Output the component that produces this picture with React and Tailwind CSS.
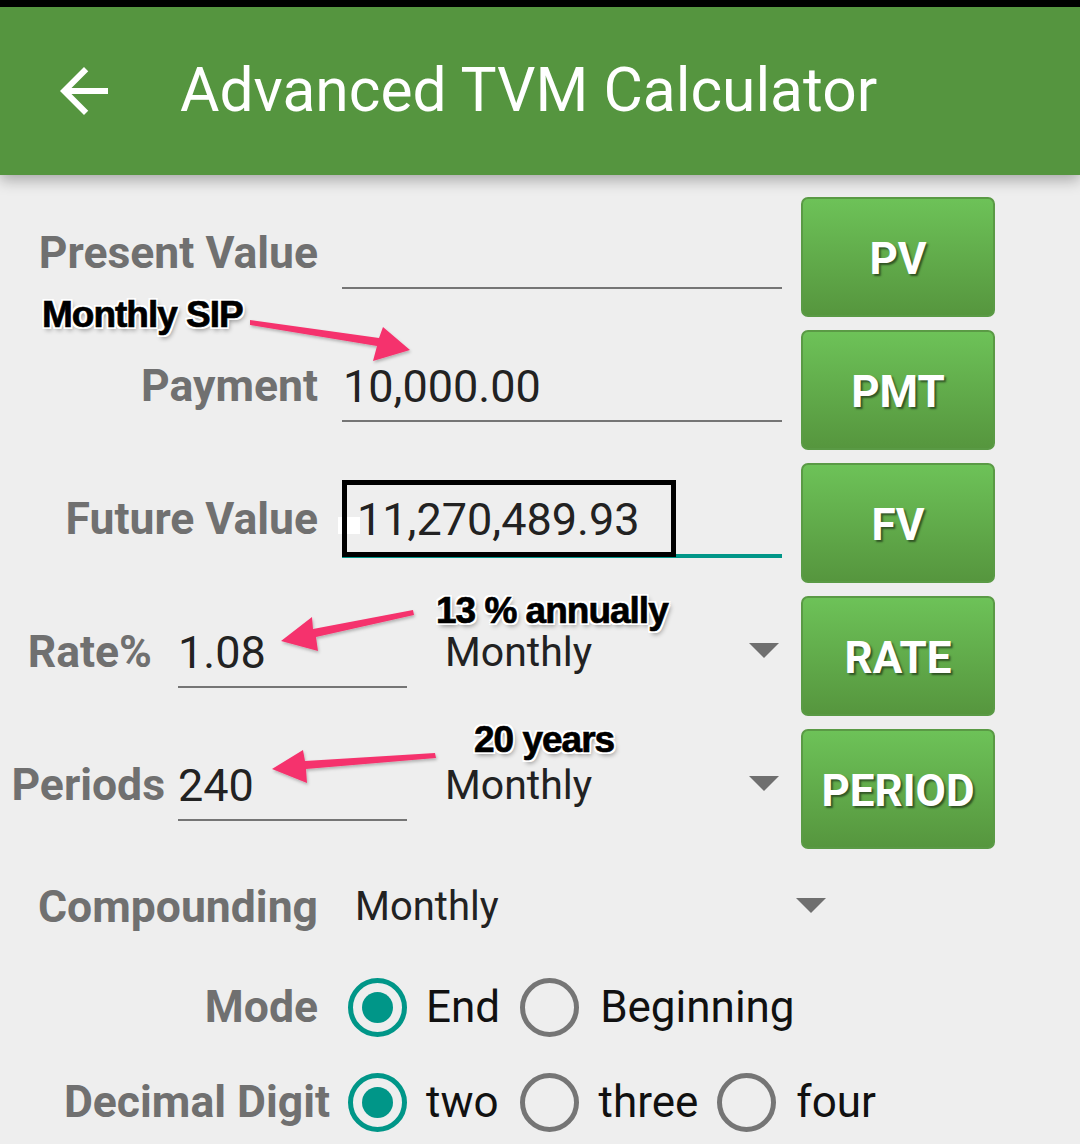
import React from "react";

function Btn({ children }) {
  return (
    <div className="flex h-[120px] w-[194px] items-center justify-center rounded-[7px] border-2 border-[#5a9a45] bg-linear-to-b from-[#6dc258] to-[#56963e] pt-[4px] text-[44px] font-bold text-white [text-shadow:2px_2px_2px_rgba(0,0,0,0.5)]">
      {children}
    </div>
  );
}

function Tri({ className = "" }) {
  return (
    <svg width="30" height="15" viewBox="0 0 30 15" className={className}>
      <polygon points="0,0 30,0 15,15" fill="#6f6f6f" />
    </svg>
  );
}

function Radio({ checked }) {
  return checked ? (
    <div className="flex h-[59px] w-[59px] shrink-0 items-center justify-center rounded-full border-[5px] border-[#009688]">
      <div className="h-[31px] w-[31px] rounded-full bg-[#009688]" />
    </div>
  ) : (
    <div className="h-[59px] w-[59px] shrink-0 rounded-full border-[5px] border-[#757575]" />
  );
}

const label = "text-right text-[44.5px] font-bold text-[#707070] leading-none";
const value = "text-[45px] text-[#222222] leading-none";
const annot =
  "absolute font-['Liberation_Sans',Arial,sans-serif] font-bold text-[37px] leading-[37px] tracking-[-1px] text-black whitespace-nowrap [-webkit-text-stroke:0.7px_#000] [text-shadow:-2px_-2px_0_#fff,2px_-2px_0_#fff,-2px_2px_0_#fff,2px_2px_0_#fff,0_2px_0_#fff,0_-2px_0_#fff,2px_0_0_#fff,-2px_0_0_#fff,2px_3px_5px_rgba(0,0,0,0.45)]";

export default function App() {
  return (
    <div className="relative h-[1144px] w-[1080px] overflow-hidden bg-[#eeeeee] font-['Roboto',sans-serif]">
      <div className="h-[7px] bg-black" />
      <div className="relative z-10 flex h-[168px] items-center bg-[#55953f] shadow-[0_5px_14px_rgba(0,0,0,0.3)]">
        <svg width="72" height="72" viewBox="0 0 24 24" className="ml-[48px]">
          <path d="M20 11H7.83l5.59-5.59L12 4l-8 8 8 8 1.41-1.41L7.83 13H20v-2z" fill="#ffffff" />
        </svg>
        <span className="ml-[60px] text-[60.5px] leading-none text-white">Advanced TVM Calculator</span>
      </div>

      <div className="flex flex-col gap-[13px] pt-[22px]">
        {/* PV */}
        <div className="flex h-[120px]">
          <div className="flex w-[801px] items-start">
            <div className={`mt-[26px] flex h-[60px] w-[318px] items-center justify-end ${label}`}>Present Value</div>
            <div className="ml-[24px] mt-[26px] h-[66px] w-[440px] border-b-2 border-[#757575]" />
          </div>
          <Btn>PV</Btn>
        </div>
        {/* PMT */}
        <div className="flex h-[120px]">
          <div className="flex w-[801px] items-start">
            <div className={`mt-[26px] flex h-[60px] w-[318px] items-center justify-end ${label}`}>Payment</div>
            <div className="ml-[24px] mt-[26px] flex h-[66px] w-[440px] items-center border-b-2 border-[#757575] pb-[4px] pl-[1px]">
              <span className={value}>10,000.00</span>
            </div>
          </div>
          <Btn>PMT</Btn>
        </div>
        {/* FV */}
        <div className="flex h-[120px]">
          <div className="flex w-[801px] items-start">
            <div className={`mt-[26px] flex h-[60px] w-[318px] items-center justify-end ${label}`}>Future Value</div>
            <div className="relative ml-[24px] mt-[26px] flex h-[69px] w-[440px] items-center border-b-4 border-[#009688] pb-[4px] pl-[15px]">
              <div className="absolute left-[-4px] top-[28px] h-[17px] w-[22px] bg-white" />
              <span className={`relative ${value}`}>11,270,489.93</span>
              <div className="absolute left-0 top-[-9px] h-[77px] w-[334px] border-[5px] border-black" />
            </div>
          </div>
          <Btn>FV</Btn>
        </div>
        {/* RATE */}
        <div className="flex h-[120px]">
          <div className="flex w-[801px] items-start">
            <div className={`mt-[26px] flex h-[60px] w-[152px] items-center justify-end ${label}`}>Rate%</div>
            <div className="ml-[26px] mt-[26px] flex h-[66px] w-[229px] items-center border-b-2 border-[#757575] pb-[4px]">
              <span className={value}>1.08</span>
            </div>
            <div className="ml-[23px] mt-[26px] flex h-[60px] w-[352px] items-center justify-between pl-[15px] pr-[3px]">
              <span className="text-[41px] leading-none text-[#222222]">Monthly</span>
              <Tri className="mb-[4px]" />
            </div>
          </div>
          <Btn>RATE</Btn>
        </div>
        {/* PERIOD */}
        <div className="flex h-[120px]">
          <div className="flex w-[801px] items-start">
            <div className={`mt-[26px] flex h-[60px] w-[165px] items-center justify-end ${label}`}>Periods</div>
            <div className="ml-[13px] mt-[26px] flex h-[66px] w-[229px] items-center border-b-2 border-[#757575] pb-[4px]">
              <span className={value}>240</span>
            </div>
            <div className="ml-[23px] mt-[26px] flex h-[60px] w-[352px] items-center justify-between pl-[15px] pr-[3px]">
              <span className="text-[41px] leading-none text-[#222222]">Monthly</span>
              <Tri className="mb-[4px]" />
            </div>
          </div>
          <Btn>PERIOD</Btn>
        </div>
      </div>

      {/* Compounding */}
      <div className="mt-[18px] flex h-[80px] items-center">
        <div className={`w-[318px] ${label}`}>Compounding</div>
        <div className="ml-[37px] flex w-[471px] items-center justify-between">
          <span className="text-[40px] leading-none text-[#222222]">Monthly</span>
          <Tri className="mb-[4px]" />
        </div>
      </div>

      {/* Mode */}
      <div className="mt-[20px] flex h-[80px] items-center">
        <div className={`w-[318px] ${label}`}>Mode</div>
        <div className="ml-[30px] flex items-center">
          <Radio checked />
          <span className="ml-[19px] text-[44px] leading-none text-[#111111]">End</span>
          <div className="ml-[20px]"><Radio /></div>
          <span className="ml-[21px] text-[44px] leading-none text-[#111111]">Beginning</span>
        </div>
      </div>

      {/* Decimal Digit */}
      <div className="mt-[15px] flex h-[80px] items-center">
        <div className={`w-[330px] ${label}`}>Decimal Digit</div>
        <div className="ml-[18px] flex items-center">
          <Radio checked />
          <span className="ml-[19px] text-[44px] leading-none text-[#111111]">two</span>
          <div className="ml-[21px]"><Radio /></div>
          <span className="ml-[20px] text-[44px] leading-none text-[#111111]">three</span>
          <div className="ml-[19px]"><Radio /></div>
          <span className="ml-[20px] text-[44px] leading-none text-[#111111]">four</span>
        </div>
      </div>

      {/* annotations */}
      <svg className="pointer-events-none absolute left-0 top-0" width="1080" height="1144" viewBox="0 0 1080 1144">
        <defs>
          <filter id="sh" x="-10%" y="-50%" width="120%" height="200%">
            <feDropShadow dx="1" dy="2" stdDeviation="1.5" floodColor="#000" floodOpacity="0.25" />
          </filter>
        </defs>
        <g fill="#f5336d" filter="url(#sh)">
          <polygon points="250,320 379,338 383,327 410,350 373,361 377,346 250,325" />
          <polygon points="413,610 313,629 312,617 281,641 318,651 316,637 414,615" />
          <polygon points="435,753 305,761 303,750 272,769 307,783 306,769 436,758" />
        </g>
      </svg>
      <div className={`${annot} left-[42px] top-[296px]`}>Monthly SIP</div>
      <div className={`${annot} left-[436px] top-[592px]`}>13 % annually</div>
      <div className={`${annot} left-[474px] top-[721px]`}>20 years</div>
    </div>
  );
}
